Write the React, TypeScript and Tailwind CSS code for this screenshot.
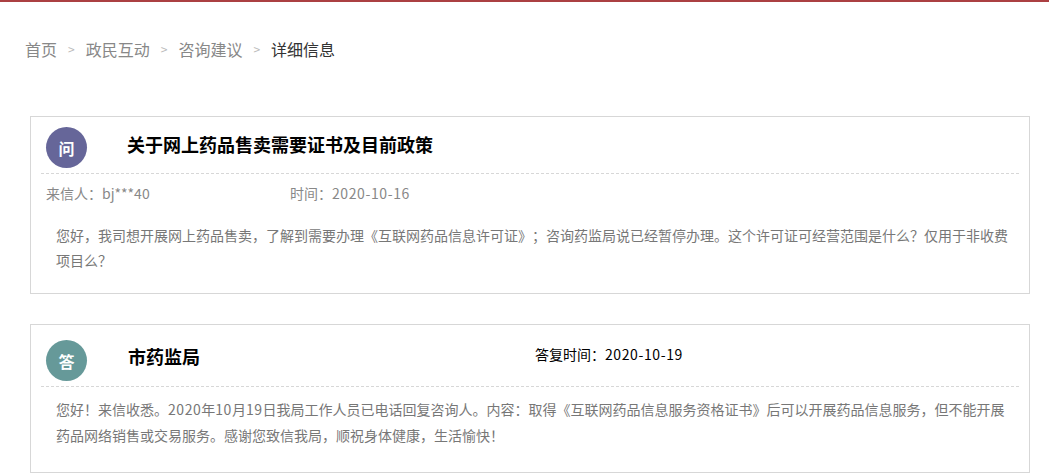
const font = "font-['Noto_Sans_CJK_SC','Liberation_Sans',sans-serif]";

function Avatar({ label, color }: { label: string; color: string }) {
  return (
    <div className={`flex h-[41px] w-[41px] shrink-0 items-center justify-center rounded-full text-base font-bold text-white ${color}`}>
      {label}
    </div>
  );
}

function Sep() {
  return <span className="mx-[11px] text-xs text-[#bbbbbb]">&gt;</span>;
}

export default function App() {
  return (
    <div className={`h-[476px] overflow-hidden bg-white [text-spacing-trim:space-all] ${font}`}>
      <div className="h-[2px] bg-[#ab4042]" />

      <div className="mt-[35px] flex h-[24px] items-center pl-[25px] text-base text-[#888888]">
        <span>首页</span>
        <Sep />
        <span>政民互动</span>
        <Sep />
        <span>咨询建议</span>
        <Sep />
        <span className="text-[#333333]">详细信息</span>
      </div>

      <div className="mt-[55px] ml-[30px] h-[178px] w-[1000px] border border-[#d7d7d7] px-[10px]">
        <div className="flex h-[57px] items-start border-b border-dashed border-[#d7d7d7] pt-[10px] pl-[5px]">
          <Avatar label="问" color="bg-[#666699]" />
          <h1 className="ml-[40px] mt-[2px] text-lg font-bold leading-[30px] text-black">关于网上药品售卖需要证书及目前政策</h1>
        </div>
        <div className="flex h-[37px] items-center pl-[5px] text-sm text-[#888888]">
          <span className="w-[244px]">来信人：bj***40</span>
          <span>时间：<span className="tracking-[0.6px]">2020-10-16</span></span>
        </div>
        <p className="mt-[12px] pl-[15px] pr-[10px] text-[14px] leading-[25px] text-[#777777]">
          您好，我司想开展网上药品售卖，了解到需要办理《互联网药品信息许可证》；咨询药监局说已经暂停办理。这个许可证可经营范围是什么？仅用于非收费项目么？
        </p>
      </div>

      <div className="mt-[30px] ml-[30px] h-[149px] w-[1000px] border border-[#d7d7d7] px-[10px]">
        <div className="flex h-[62px] items-start border-b border-dashed border-[#d7d7d7] pt-[15px] pl-[5px]">
          <Avatar label="答" color="bg-[#669999]" />
          <h2 className="ml-[41px] mt-[1px] w-[407px] text-lg font-bold leading-[30px] text-black">市药监局</h2>
          <span className="mt-[2px] text-sm leading-[24px] text-black">答复时间：<span className="tracking-[0.6px]">2020-10-19</span></span>
        </div>
        <div className="mt-[9px] pl-[15px] pr-[10px] text-[14px] leading-[26px] text-[#777777]">
          <p>
            您好！来信收悉。<span className="tracking-[0.55px]">2020</span>年<span className="tracking-[0.55px]">10</span>月<span className="tracking-[0.55px]">19</span>日我局工作人员已电话回复咨询人。内容：取得《互联网药品信息服务资格证书》后可以开展药品信息服务，但不能开展
          </p>
          <p>药品网络销售或交易服务。感谢您致信我局，顺祝身体健康，生活愉快！</p>
        </div>
      </div>
    </div>
  );
}
